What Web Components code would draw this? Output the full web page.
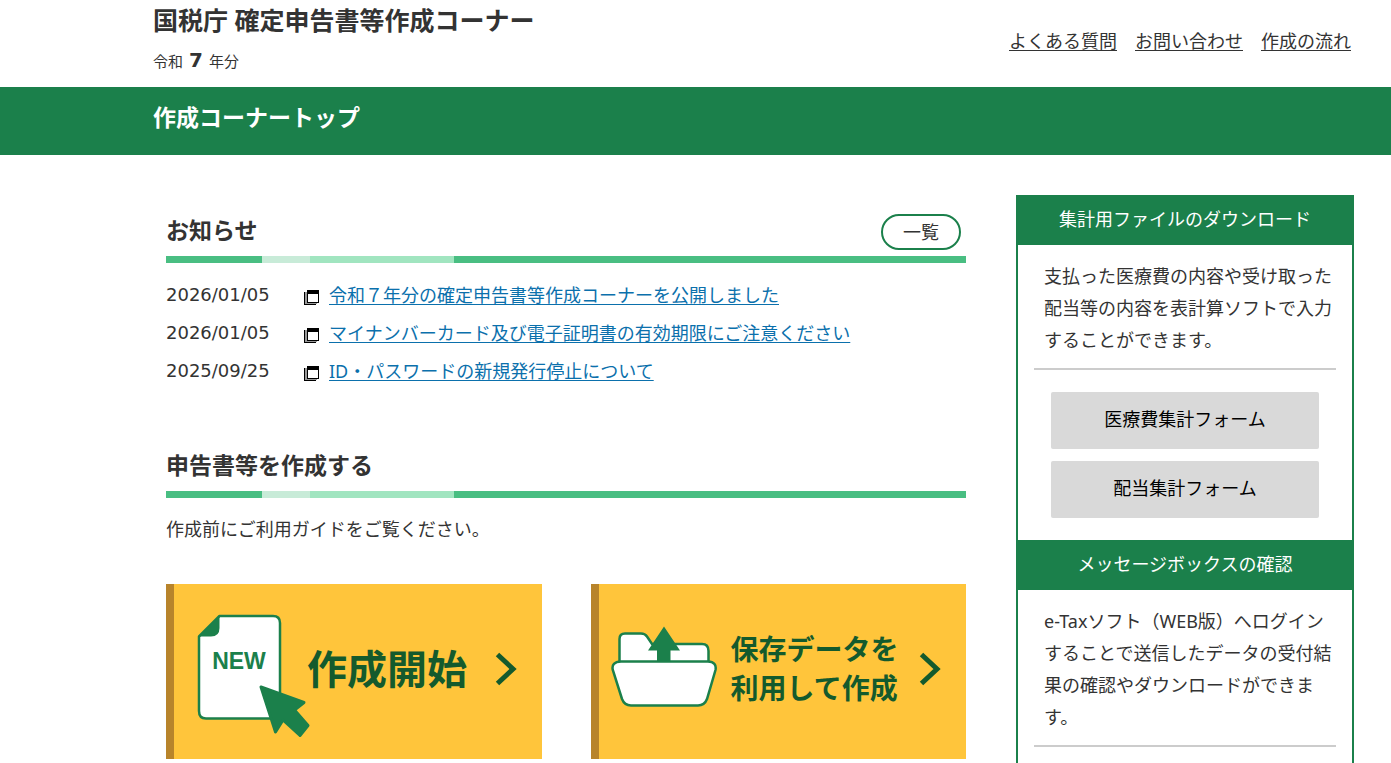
<!DOCTYPE html>
<html lang="ja">
<head>
<meta charset="utf-8">
<meta name="viewport" content="width=device-width, initial-scale=1">
<title>国税庁 確定申告書等作成コーナー</title>
<style>
  :root {
    --green: #1b804b;
    --text: #333;
    --link: #0b70ac;
  }
  body {
    margin: 0;
    min-height: 100vh;
    display: flex;
    flex-direction: column;
    background: #fff;
    color: var(--text);
    font-family: "Noto Sans", "Noto Sans CJK JP", sans-serif;
    font-size: 18px;
    line-height: 32px;
  }
</style>
</head>
<body>

<corner-header>
  <span slot="title">国税庁 確定申告書等作成コーナー</span>
  <span slot="year">7</span>
  <header-link href="#faq">よくある質問</header-link>
  <header-link href="#contact">お問い合わせ</header-link>
  <header-link href="#flow">作成の流れ</header-link>
</corner-header>

<page-title>作成コーナートップ</page-title>

<corner-layout>
  <content-section heading="お知らせ">
    <pill-button slot="action">一覧</pill-button>
    <news-item date="2026/01/05" href="#news1">令和７年分の確定申告書等作成コーナーを公開しました</news-item>
    <news-item date="2026/01/05" href="#news2">マイナンバーカード及び電子証明書の有効期限にご注意ください</news-item>
    <news-item date="2025/09/25" href="#news3">ID・パスワードの新規発行停止について</news-item>
  </content-section>

  <content-section heading="申告書等を作成する">
    <guide-text>作成前にご利用ガイドをご覧ください。</guide-text>
    <card-row>
      <start-card href="#new" size="large">
        <new-document-icon slot="icon"></new-document-icon>
        作成開始
      </start-card>
      <start-card href="#saved">
        <folder-icon slot="icon"></folder-icon>
        保存データを<br>利用して作成
      </start-card>
    </card-row>
  </content-section>

  <side-panel slot="side">
    <side-block heading="集計用ファイルのダウンロード">
      支払った医療費の内容や受け取った配当等の内容を表計算ソフトで入力することができます。
      <side-button slot="buttons">医療費集計フォーム</side-button>
      <side-button slot="buttons">配当集計フォーム</side-button>
    </side-block>
    <side-block heading="メッセージボックスの確認">
      e-Taxソフト（WEB版）へログインすることで送信したデータの受付結果の確認やダウンロードができます。
    </side-block>
  </side-panel>
</corner-layout>

<script>
// Attaches an open shadow root filled from the given markup
function render(host, html) {
  const template = document.createElement('template');
  template.innerHTML = html;
  host.attachShadow({ mode: 'open' }).appendChild(template.content.cloneNode(true));
}

class CornerHeader extends HTMLElement {
  constructor() {
    super();
    render(this, `
      <style>
        :host { display: block; }
        header {
          display: flex;
          justify-content: space-between;
          align-items: center;
          height: 87px;
          padding: 0 40px 6px 153px;
          box-sizing: border-box;
        }
        h1 {
          margin: 0;
          font-size: 25px;
          line-height: 40px;
        }
        p {
          margin: 0;
          font-size: 15px;
          line-height: 40px;
        }
        strong {
          margin: 0 6px;
          font-family: "DejaVu Sans", sans-serif;
          font-size: 20px;
        }
        nav { display: flex; gap: 18px; }
      </style>
      <header>
        <div>
          <h1><slot name="title"></slot></h1>
          <p>令和<strong><slot name="year"></slot></strong>年分</p>
        </div>
        <nav><slot></slot></nav>
      </header>
    `);
  }
}

class HeaderLink extends HTMLElement {
  constructor() {
    super();
    render(this, `
      <style>
        :host { display: block; white-space: nowrap; }
        a {
          color: inherit;
          text-decoration: underline;
          text-decoration-thickness: 1px;
          text-underline-offset: 2px;
        }
        a:hover { text-decoration: none; }
      </style>
      <a href="${this.getAttribute('href')}"><slot></slot></a>
    `);
  }
}

class PageTitle extends HTMLElement {
  constructor() {
    super();
    render(this, `
      <style>
        :host {
          display: block;
          padding: 0 40px 8px 153px;
          background: var(--green);
          color: #fff;
        }
        h2 {
          margin: 0;
          font-size: 23px;
          line-height: 60px;
        }
      </style>
      <h2><slot></slot></h2>
    `);
  }
}

class CornerLayout extends HTMLElement {
  constructor() {
    super();
    render(this, `
      <style>
        :host {
          flex: 1;
          display: grid;
          grid-template-columns: minmax(0, 1fr) 338px;
          gap: 50px;
          padding: 40px 37px 0 166px;
        }
        main {
          display: flex;
          flex-direction: column;
          gap: 52px;
          padding-top: 12px;
        }
        aside { display: flex; }
      </style>
      <main><slot></slot></main>
      <aside><slot name="side"></slot></aside>
    `);
  }
}

class ContentSection extends HTMLElement {
  constructor() {
    super();
    render(this, `
      <style>
        :host { display: block; }
        .head {
          display: flex;
          justify-content: space-between;
          align-items: center;
          height: 49px;
          padding-right: 5px;
        }
        h3 {
          margin: 0;
          padding-bottom: 4px;
          font-size: 23px;
        }
        .bar {
          height: 7px;
          background: linear-gradient(90deg,
            #49be82 12%, #c8ebd8 12% 18%, #a1e5c0 18% 36%, #49be82 36%);
        }
        .body { padding-top: 13px; }
      </style>
      <section>
        <div class="head">
          <h3>${this.getAttribute('heading')}</h3>
          <slot name="action"></slot>
        </div>
        <div class="bar"></div>
        <div class="body"><slot></slot></div>
      </section>
    `);
  }
}

class PillButton extends HTMLElement {
  constructor() {
    super();
    render(this, `
      <style>
        :host { display: block; }
        button {
          display: block;
          height: 36px;
          padding: 0 20px;
          border: 2px solid var(--green);
          border-radius: 18px;
          background: #fff;
          color: inherit;
          font: inherit;
          cursor: pointer;
        }
      </style>
      <button type="button"><slot></slot></button>
    `);
  }
}

class NewsItem extends HTMLElement {
  constructor() {
    super();
    render(this, `
      <style>
        :host {
          display: flex;
          align-items: center;
          line-height: 38px;
        }
        time {
          width: 138px;
          font-family: "DejaVu Sans", sans-serif;
        }
        svg { margin: 4px 10px 0 0; }
        a {
          color: var(--link);
          text-decoration: underline;
          text-decoration-thickness: 1px;
          text-underline-offset: 2px;
        }
        a:hover { text-decoration: none; }
      </style>
      <time>${this.getAttribute('date')}</time>
      <svg width="15" height="15" viewBox="0 0 15 15" shape-rendering="crispEdges" aria-hidden="true">
        <rect x="0" y="2" width="12" height="13" fill="#000"/>
        <rect x="1" y="2" width="12" height="12" fill="#999"/>
        <rect x="3" y="0" width="12" height="13" fill="#000"/>
        <rect x="4" y="4" width="10" height="8" fill="#fff"/>
      </svg>
      <a href="${this.getAttribute('href')}"><slot></slot></a>
    `);
  }
}

class GuideText extends HTMLElement {
  constructor() {
    super();
    render(this, `
      <style>
        :host { display: block; }
        p { margin: 2px 0 39px; }
      </style>
      <p><slot></slot></p>
    `);
  }
}

class CardRow extends HTMLElement {
  constructor() {
    super();
    render(this, `
      <style>
        :host {
          display: grid;
          grid-template-columns: 1fr 1fr;
          gap: 49px;
        }
      </style>
      <slot></slot>
    `);
  }
}

class StartCard extends HTMLElement {
  constructor() {
    super();
    render(this, `
      <style>
        :host { display: block; }
        a {
          display: flex;
          align-items: center;
          height: 175px;
          padding: 0 25px 6px 12px;
          box-sizing: border-box;
          border-left: 8px solid #b8842b;
          background: #ffc53b;
          color: #145a2d;
          text-decoration: none;
          font-size: 28px;
          font-weight: bold;
          line-height: 39px;
        }
        a:hover { opacity: 0.8; }
        :host([size="large"]) a {
          padding-left: 23px;
          font-size: 40px;
        }
        .label { white-space: nowrap; }
        .arrow { margin-left: auto; }
      </style>
      <a href="${this.getAttribute('href')}">
        <slot name="icon"></slot>
        <span class="label"><slot></slot></span>
        <svg class="arrow" width="22" height="34" viewBox="0 0 22 34" aria-hidden="true">
          <path d="M2.5 2.5 L18 17 L2.5 31.5" fill="none" stroke="#145a2d" stroke-width="5"/>
        </svg>
      </a>
    `);
  }
}

class NewDocumentIcon extends HTMLElement {
  constructor() {
    super();
    render(this, `
      <style>
        :host { display: block; width: 110px; padding-top: 14px; }
        svg { display: block; overflow: visible; }
        text {
          font-family: "Liberation Sans", sans-serif;
          font-size: 23px;
          font-weight: bold;
        }
      </style>
      <svg width="110" height="124" viewBox="0 0 110 124" aria-hidden="true">
        <path d="M22.5 2 H76 Q83 2 83 9 V97 Q83 104.500 76 104.500 H9 Q2 104.500 2 97 V22.5 Z" fill="#fff" stroke="#1b804b" stroke-width="2.5" stroke-linejoin="round"/>
        <path d="M2 22.5 L22.5 2 V14 Q22.5 22.5 14 22.5 Z" fill="#1b804b"/>
        <text x="42" y="55" text-anchor="middle" fill="#1b804b">NEW</text>
        <path d="M64 73 L107 88.5 L97.5 96 L111 111.5 L103 121.5 L86 106 L78.5 118 Z" fill="#1b804b" stroke="#1b804b" stroke-width="3" stroke-linejoin="round"/>
      </svg>
    `);
  }
}

class FolderIcon extends HTMLElement {
  constructor() {
    super();
    render(this, `
      <style>
        :host { display: block; width: 120px; padding-bottom: 2px; }
        svg { display: block; }
      </style>
      <svg width="107" height="86" viewBox="0 0 107 86" aria-hidden="true">
        <path d="M8.5 42 V14 Q8.5 8.5 14 8.5 H30 Q34 8.5 36 11.5 L41 19 H91 Q97.5 19 97.5 26 V42" fill="#fff" stroke="#1b804b" stroke-width="2.5"/>
        <path d="M10 36.5 H97 Q106 37 104.5 45 L96 74 Q93.5 80.5 87 80.5 H20 Q13.5 80.5 11 74 L1.8 45 Q0 37 10 36.5 Z" fill="#fff" stroke="#1b804b" stroke-width="2.5"/>
        <path d="M53 1.5 L69 25.5 H59.5 V37 H46 V25.5 H37 Z" fill="#1b804b"/>
      </svg>
    `);
  }
}

class SidePanel extends HTMLElement {
  constructor() {
    super();
    render(this, `
      <style>
        :host {
          display: block;
          flex: 1;
          border: solid var(--green);
          border-width: 0 2px;
        }
      </style>
      <slot></slot>
    `);
  }
}

class SideBlock extends HTMLElement {
  constructor() {
    super();
    render(this, `
      <style>
        :host { display: block; }
        h3 {
          margin: 0;
          padding-bottom: 2px;
          background: var(--green);
          color: #fff;
          font-size: 18px;
          font-weight: normal;
          line-height: 48px;
          text-align: center;
        }
        p {
          margin: 0;
          padding: 15px 18px 12px 26px;
        }
        hr {
          margin: 0 16px;
          border: 0;
          border-top: 2px solid #ccc;
        }
        .buttons {
          display: grid;
          gap: 12px;
          padding: 22px 33px;
        }
      </style>
      <section>
        <h3>${this.getAttribute('heading')}</h3>
        <p><slot></slot></p>
        <hr>
      </section>
    `);
    // blocks without buttons end at the rule
    if (this.querySelector('[slot="buttons"]')) {
      const box = document.createElement('div');
      box.className = 'buttons';
      box.innerHTML = '<slot name="buttons"></slot>';
      this.shadowRoot.querySelector('section').appendChild(box);
    }
  }
}

class SideButton extends HTMLElement {
  constructor() {
    super();
    render(this, `
      <style>
        :host { display: block; }
        button {
          display: block;
          width: 100%;
          height: 57px;
          padding: 0 0 4px;
          border: 0;
          border-radius: 2px;
          background: #d9d9d9;
          color: #000;
          font: inherit;
          cursor: pointer;
        }
        button:hover { background: #ccc; }
      </style>
      <button type="button"><slot></slot></button>
    `);
  }
}

customElements.define('corner-header', CornerHeader);
customElements.define('header-link', HeaderLink);
customElements.define('page-title', PageTitle);
customElements.define('corner-layout', CornerLayout);
customElements.define('content-section', ContentSection);
customElements.define('pill-button', PillButton);
customElements.define('news-item', NewsItem);
customElements.define('guide-text', GuideText);
customElements.define('card-row', CardRow);
customElements.define('start-card', StartCard);
customElements.define('new-document-icon', NewDocumentIcon);
customElements.define('folder-icon', FolderIcon);
customElements.define('side-panel', SidePanel);
customElements.define('side-block', SideBlock);
customElements.define('side-button', SideButton);
</script>
</body>
</html>
